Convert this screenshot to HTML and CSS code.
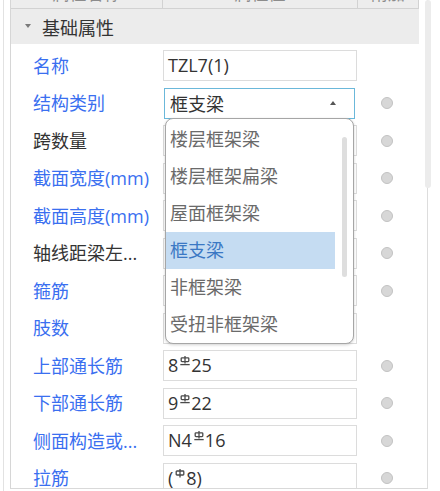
FILE: index.html
```html
<!DOCTYPE html>
<html lang="zh-CN">
<head>
<meta charset="utf-8">
<title>属性编辑器</title>
<link rel="stylesheet" href="styles.css">
</head>
<body>
<div class="screen">
  <div class="outer">
    <div class="panel">
      <div class="head">
        <div class="hc">属性名称</div>
        <div class="hc">属性值</div>
        <div class="hc">附加</div>
      </div>
      <div class="group"><span class="caret"></span>基础属性</div>
      <div class="rows">
        <div class="row">
          <div class="label blue">名称</div>
          <div class="val"><div class="box">TZL7(1)</div></div>
          <div class="extra"></div>
        </div>
        <div class="row">
          <div class="label blue">结构类别</div>
          <div class="val">
            <div class="select">框支梁<span class="up"></span></div>
            <div class="dropdown">
              <div class="item">楼层框架梁</div>
              <div class="item">楼层框架扁梁</div>
              <div class="item">屋面框架梁</div>
              <div class="item selected">框支梁</div>
              <div class="item">非框架梁</div>
              <div class="item">受扭非框架梁</div>
              <div class="dd-thumb"></div>
            </div>
          </div>
          <div class="extra"><span class="radio"></span></div>
        </div>
        <div class="row">
          <div class="label">跨数量</div>
          <div class="val"><div class="box"></div></div>
          <div class="extra"><span class="radio"></span></div>
        </div>
        <div class="row">
          <div class="label blue">截面宽度(mm)</div>
          <div class="val"><div class="box"></div></div>
          <div class="extra"><span class="radio"></span></div>
        </div>
        <div class="row">
          <div class="label blue">截面高度(mm)</div>
          <div class="val"><div class="box"></div></div>
          <div class="extra"><span class="radio"></span></div>
        </div>
        <div class="row">
          <div class="label">轴线距梁左...</div>
          <div class="val"><div class="box"></div></div>
          <div class="extra"><span class="radio"></span></div>
        </div>
        <div class="row">
          <div class="label blue">箍筋</div>
          <div class="val"><div class="box"></div></div>
          <div class="extra"><span class="radio"></span></div>
        </div>
        <div class="row">
          <div class="label blue">肢数</div>
          <div class="val"><div class="box"></div></div>
          <div class="extra"></div>
        </div>
        <div class="row">
          <div class="label blue">上部通长筋</div>
          <div class="val"><div class="box">8<svg class="grade" viewBox="0 0 10 10" width="10" height="10"><line x1="5" y1="0" x2="5" y2="7.5"/><rect x="1.2" y="1.8" width="7.6" height="3.8" rx="0.8"/><line x1="0.3" y1="8.6" x2="9.7" y2="8.6"/></svg>25</div></div>
          <div class="extra"><span class="radio"></span></div>
        </div>
        <div class="row">
          <div class="label blue">下部通长筋</div>
          <div class="val"><div class="box">9<svg class="grade" viewBox="0 0 10 10" width="10" height="10"><line x1="5" y1="0" x2="5" y2="7.5"/><rect x="1.2" y="1.8" width="7.6" height="3.8" rx="0.8"/><line x1="0.3" y1="8.6" x2="9.7" y2="8.6"/></svg>22</div></div>
          <div class="extra"><span class="radio"></span></div>
        </div>
        <div class="row">
          <div class="label blue">侧面构造或...</div>
          <div class="val"><div class="box">N4<svg class="grade" viewBox="0 0 10 10" width="10" height="10"><line x1="5" y1="0" x2="5" y2="7.5"/><rect x="1.2" y="1.8" width="7.6" height="3.8" rx="0.8"/><line x1="0.3" y1="8.6" x2="9.7" y2="8.6"/></svg>16</div></div>
          <div class="extra"><span class="radio"></span></div>
        </div>
        <div class="row">
          <div class="label blue">拉筋</div>
          <div class="val"><div class="box">(<svg class="grade" viewBox="0 0 10 10" width="10" height="10"><line x1="5" y1="0" x2="5" y2="8.5"/><rect x="1.2" y="2" width="7.6" height="4" rx="0.8"/></svg>8)</div></div>
          <div class="extra"><span class="radio"></span></div>
        </div>
      </div>
    </div>
  </div>
  <div class="scroll-thumb"></div>
</div>
</body>
</html>
```
FILE: styles.css
```css
html, body {
  margin: 0;
  padding: 0;
  background: #ffffff;
}

body {
  font-family: "Open Sans", "Noto Sans CJK SC", sans-serif;
  font-size: 18px;
  color: #333333;
}

.screen {
  position: relative;
  width: 440px;
  height: 491px;
  overflow: hidden;
  background: #ffffff;
}

.outer {
  margin-left: 3px;
  height: 491px;
  border-left: 1px solid #e2e2e2;
  padding-left: 6px;
}

.panel {
  box-sizing: border-box;
  width: 418px;
  height: 489px;
  border-left: 1px solid #d6d6d6;
  border-right: 1px solid #dddddd;
  border-bottom: 1px solid #d9d9d9;
  overflow: hidden;
}

.head {
  display: grid;
  grid-template-columns: 152px 195px 61px;
  height: 30px;
  margin-top: -21px;
  background: #ededed;
  border-bottom: 1px solid #d2d2d2;
  box-sizing: border-box;
  width: 408px;
}

.hc {
  border-right: 1px solid #d2d2d2;
  text-align: center;
  font-size: 17px;
  line-height: 29px;
  color: #8c8c8c;
}

.group {
  display: flex;
  align-items: center;
  width: 408px;
  height: 35px;
  background: #ececec;
  padding-left: 14px;
  box-sizing: border-box;
  color: #333333;
  font-size: 18px;
}

.caret {
  width: 0;
  height: 0;
  border-left: 3px solid transparent;
  border-right: 3px solid transparent;
  border-top: 4px solid #7a7a7a;
  margin-right: 11px;
  margin-top: -2px;
}

.rows {
  padding-top: 3px;
}

.row {
  display: grid;
  grid-template-columns: 152px 195px 61px;
  height: 37.5px;
  align-items: center;
}

.label {
  padding-left: 22px;
  white-space: nowrap;
  color: #333333;
  line-height: 24px;
}

.label.blue {
  color: #3a6ff0;
}

.val {
  position: relative;
  height: 31px;
}

.box {
  box-sizing: border-box;
  width: 194px;
  height: 31px;
  border: 1px solid #dcdcdc;
  padding-left: 4px;
  line-height: 29px;
  color: #333333;
  white-space: nowrap;
  background: #ffffff;
}

.grade {
  width: 10px;
  height: 10px;
  margin: 0 1px 0 2px;
  vertical-align: 6px;
  fill: none;
  stroke: #4a4a4a;
  stroke-width: 1.3;
}

.select {
  box-sizing: border-box;
  display: flex;
  align-items: center;
  justify-content: space-between;
  margin-left: 1px;
  width: 191px;
  height: 31px;
  border: 1px solid #6bb8da;
  padding: 0 18px 0 5px;
  color: #333333;
  background: #ffffff;
}

.up {
  width: 0;
  height: 0;
  border-left: 3px solid transparent;
  border-right: 3px solid transparent;
  border-bottom: 4px solid #555555;
}

.dropdown {
  position: absolute;
  left: 2px;
  top: 30px;
  z-index: 5;
  box-sizing: border-box;
  width: 189px;
  height: 226px;
  padding-top: 2px;
  border: 1px solid #a6a6a6;
  border-radius: 8px;
  background: #ffffff;
  box-shadow: 0 1px 3px rgba(0, 0, 0, 0.18);
}

.item {
  width: 169px;
  height: 37px;
  line-height: 37px;
  padding-left: 4px;
  box-sizing: border-box;
  color: #6a6a6a;
  white-space: nowrap;
}

.item.selected {
  background: #c5dcf2;
  color: #3b78c4;
}

.dd-thumb {
  position: absolute;
  left: 176px;
  top: 18px;
  width: 5px;
  height: 140px;
  border-radius: 3px;
  background: #dedede;
}

.extra {
  display: flex;
  align-items: center;
  padding-left: 23px;
  height: 31px;
}

.radio {
  box-sizing: border-box;
  width: 12px;
  height: 12px;
  border-radius: 50%;
  background: #d7d7d7;
  border: 1px solid #c2c2c2;
}

.scroll-thumb {
  position: absolute;
  left: 425px;
  top: 0;
  width: 6px;
  height: 188px;
  border-radius: 3px;
  background: #ececec;
}
```
